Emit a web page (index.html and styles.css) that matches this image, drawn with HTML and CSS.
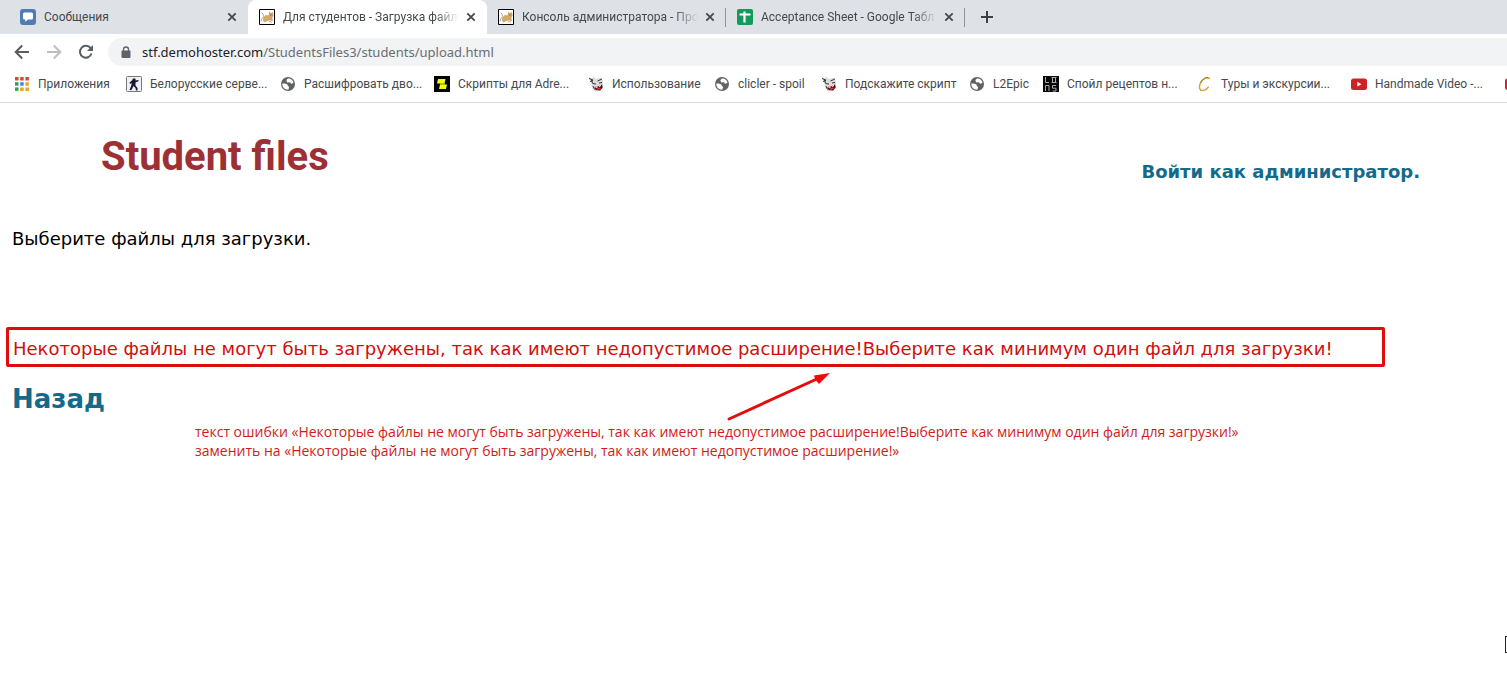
FILE: index.html
```html
<!DOCTYPE html>
<html lang="ru">
<head>
<meta charset="utf-8">
<title>Для студентов - Загрузка файлов</title>
<link rel="stylesheet" href="styles.css">
</head>
<body>
<svg class="defs" aria-hidden="true">
  <symbol id="close" viewBox="0 0 16 16"><path d="M4.3 4.3l7.4 7.4M11.7 4.3l-7.4 7.4" stroke="#45494d" stroke-width="1.8" fill="none"/></symbol>
  <symbol id="cat" viewBox="0 0 16 16"><path d="M.5.5h15v15H.5z" fill="#fff" stroke="#000"/><path d="M4.500 9l2-2.500 3.500.3L10.500 3l1.300 1.500 1.700-1 .8 3-1.300 2 .5 3.500-2-1-3 .5-3 1.500-1-1z" fill="#d9ab62" stroke="#a17a40" stroke-width=".4"/><path d="M2.500 3.500l1.500 1.500.5 2.500-2 2.500-.5 2.500M10 12.500l3 .5" fill="none" stroke="#999" stroke-width=".8"/><path d="M11.500 6h.8" stroke="#222"/></symbol>
  <symbol id="globe" viewBox="0 0 16 16"><circle cx="8" cy="8" r="7" fill="#5f6368"/><path d="M2.300 7.500c1.500-.2 3.500 0 4.700.8.900.7.500 1.700 1.700 2.200.6.300.2 2-.4 3.200C4.700 13.800 2.200 11.200 2.300 7.500zM6.500 4.200C6.800 3 8 2.400 9.300 2.500c2.200.5 3.700 2 4.200 4-.8.500-1.200 1.400-2.300 1.200-.9-.2-.5-1.300-1.500-1.400-1.200 0-2.300.5-2.700-.4-.2-.6-.6-.9-.5-1.700z" fill="#fff"/></symbol>
  <symbol id="face" viewBox="0 0 16 16"><path d="M1 1l3 1.500 1-2 3 2.500 5-1.500 2 4v6l-3 3.500-5 .5-3-4-1-5z" fill="#dcdcdc"/><path d="M1 2.500l4 1.500M2 5.500l3-1M4.500 7.500l3.500.5M9.500 5l4.500-2M11 7l3-.5M5 10l1.500 3.500M3.500 4l1 3" stroke="#333" stroke-width="1" fill="none"/><path d="M6.500 11l3.500-.5 4-2 .7 3-2.700 3-4.500-.5z" fill="#511"/><path d="M8 12.700l4-1.200 1 .8-3 1.700z" fill="#e33"/><path d="M7.500 11.300h2M11 10.500l2-1" stroke="#fff"/></symbol>
  <symbol id="tube" viewBox="0 0 16 16"><rect y="2.500" width="16" height="11.500" rx="2.500" fill="#cf2227"/><path d="M6.300 5.800l4.200 2.400-4.200 2.400z" fill="#fff"/></symbol>
</svg>

<nav class="tabs" aria-label="Вкладки">
  <div class="tab first">
    <svg class="icon" viewBox="0 0 16 16"><rect width="16" height="16" rx="3" fill="#4f7db3"/><path d="M4.500 3.500h7q1.500 0 1.500 1.500v4q0 1.500-1.500 1.500H8l-2.700 2.300v-2.300h-.8Q3 10.500 3 9V5q0-1.500 1.500-1.500z" fill="#fff"/></svg>
    <span class="tab-title">Сообщения</span>
    <button class="close" aria-label="Закрыть"><svg class="icon"><use href="#close"/></svg></button>
  </div>
  <div class="tab active">
    <svg class="icon"><use href="#cat"/></svg>
    <span class="tab-title fade">Для студентов - Загрузка файло</span>
    <button class="close" aria-label="Закрыть"><svg class="icon"><use href="#close"/></svg></button>
  </div>
  <div class="tab divided">
    <svg class="icon"><use href="#cat"/></svg>
    <span class="tab-title fade">Консоль администратора - Про</span>
    <button class="close" aria-label="Закрыть"><svg class="icon"><use href="#close"/></svg></button>
  </div>
  <div class="tab divided">
    <svg class="icon" viewBox="0 0 16 16"><rect width="16" height="16" rx="2" fill="#149a58"/><path d="M2.500 5.500h11M7.500 2.500v11" stroke="#fff" stroke-width="2.200"/></svg>
    <span class="tab-title fade">Acceptance Sheet - Google Табл</span>
    <button class="close" aria-label="Закрыть"><svg class="icon"><use href="#close"/></svg></button>
  </div>
  <button class="new-tab" aria-label="Новая вкладка"><svg class="icon" viewBox="0 0 16 16"><path d="M8 2v12M2 8h12" stroke="#3c4043" stroke-width="2"/></svg></button>
</nav>

<div class="toolbar">
  <button class="nav-button" aria-label="Назад"><svg class="icon" viewBox="0 0 16 16"><path d="M15 8H2M8.200 1.500L1.700 8l6.500 6.500" fill="none" stroke="#5a5e62" stroke-width="2"/></svg></button>
  <button class="nav-button" aria-label="Вперёд"><svg class="icon" viewBox="0 0 16 16"><path d="M1 8h13M7.800 1.500L14.300 8l-6.500 6.500" fill="none" stroke="#bcbec0" stroke-width="2"/></svg></button>
  <button class="nav-button" aria-label="Обновить"><svg class="icon" viewBox="0 0 16 16"><path d="M13.500 9.500A5.900 5.900 0 1 1 12.600 4.200" fill="none" stroke="#5a5e62" stroke-width="2"/><path d="M15 1v6H9z" fill="#5a5e62"/></svg></button>
  <div class="address">
    <svg class="lock" viewBox="0 0 10 13"><rect x=".5" y="4.500" width="9" height="7.500" rx="1" fill="#5f6368"/><path d="M2.500 5V3.500a2.500 2.500 0 0 1 5 0V5" fill="none" stroke="#5f6368" stroke-width="1.300"/></svg>
    <span class="url"><span class="host">stf.demohoster.com</span>/StudentsFiles3/students/upload.html</span>
  </div>
</div>

<nav class="bookmarks" aria-label="Закладки">
  <a href="#"><svg class="icon" viewBox="0 0 16 16"><path d="M1 1h3.500v3.500H1zM6.200 1h3.500v3.500H6.200zM11.400 1h3.500v3.500h-3.500z" fill="#dc4638"/><path d="M1 6.200h3.500v3.500H1z" fill="#3a9c57"/><path d="M6.200 6.200h3.500v3.500H6.200z" fill="#4287e8"/><path d="M11.400 6.200h3.500v3.500h-3.500zM6.200 11.400h3.500v3.500H6.200zM11.400 11.400h3.500v3.500h-3.500z" fill="#e7a72c"/><path d="M1 11.400h3.500v3.500H1z" fill="#3a9c57"/></svg><span class="w72">Приложения</span></a>
  <a href="#"><svg class="icon" viewBox="0 0 16 16"><rect x=".5" y=".5" width="15" height="15" rx="1" fill="#eef1f5" stroke="#777"/><path d="M7 2.500h2.500v2l3-.5v1.300L9.500 6.500v3l2 2.500v2.500H10L9.500 12 7.500 10 5.500 14H3.500L5.500 9V7L4 8 3.500 6.500 6 4.500z" fill="#17182d"/></svg><span class="w114">Белорусские серве...</span></a>
  <a href="#"><svg class="icon"><use href="#globe"/></svg><span class="w114">Расшифровать дво...</span></a>
  <a href="#"><svg class="icon" viewBox="0 0 16 16"><path d="M0 0h16v16H0z" fill="#000"/><path d="M4 3h7.500l-1 4.500H3zM6 8.500h7L12 13H5z" fill="#ef1"/><path d="M6 7.500h5v1H6z" fill="#ef1"/></svg><span class="w114">Скрипты для Adre...</span></a>
  <a href="#"><svg class="icon"><use href="#face"/></svg><span class="w86">Использование</span></a>
  <a href="#"><svg class="icon"><use href="#globe"/></svg><span class="w67">clicler - spoil</span></a>
  <a href="#"><svg class="icon"><use href="#face"/></svg><span class="w108">Подскажите скрипт</span></a>
  <a href="#"><svg class="icon"><use href="#globe"/></svg><span class="w34">L2Epic</span></a>
  <a href="#"><svg class="icon" viewBox="0 0 16 16"><path d="M0 0h16v16H0z" fill="#070707"/><path d="M2.500 1v5.500H6M8.500 1.500h5M8.500 6.500h5M9.500 1.500v5M12.500 1.500v5M2.500 15V9.500h3.500V15M13 9.500h-3.500v2.700h3.500V15H9.500" fill="none" stroke="#aaa" stroke-width="1"/></svg><span class="w114">Спойл рецептов н...</span></a>
  <a href="#"><svg class="icon" viewBox="0 0 16 16"><path d="M12.800 3C11 .2 6 2 3.500 7c-2 4.300-1 8 2.500 7.500 2.300-.3 4.300-1.700 5.700-3.700" fill="none" stroke="#d2a641" stroke-width="1.500"/><path d="M3.500 7C6 2 9 1.200 11 1.800" fill="none" stroke="#95702b"/></svg><span class="w114">Туры и экскурсии...</span></a>
  <a href="#"><svg class="icon"><use href="#tube"/></svg><span class="w114">Handmade Video -...</span></a>
  <a href="#" aria-label="Видео"><svg class="icon"><use href="#tube"/></svg></a>
</nav>

<main class="page">
  <header class="header">
    <h1 class="logo">Student files</h1>
    <a class="login" href="#">Войти как администратор.</a>
  </header>
  <p class="prompt">Выберите файлы для загрузки.</p>
  <p class="error">Некоторые файлы не могут быть загружены, так как имеют недопустимое расширение!Выберите как минимум один файл для загрузки!</p>
  <a class="back" href="#">Назад</a>
  <p class="note">текст ошибки «Некоторые файлы не могут быть загружены, так как имеют недопустимое расширение!Выберите как минимум один файл для загрузки!»<br>заменить на «Некоторые файлы не могут быть загружены, так как имеют недопустимое расширение!»</p>
  <svg class="arrow" viewBox="0 0 104 50" aria-hidden="true"><path d="M2 47L92 6" stroke="#e60c0c" stroke-width="3" stroke-linecap="round"/><path d="M103 1L87 3.500l1.500 4.500 3.500 4z" fill="#f00a0a"/></svg>
  <span class="pointer" aria-hidden="true"></span>
</main>
</body>
</html>
```
FILE: styles.css
```css
* { box-sizing: border-box; }

body {
  margin: 0;
  min-height: 100vh;
  display: flex;
  flex-direction: column;
  overflow: hidden;
  background: #fff;
  color: #000;
  font-family: "DejaVu Sans", sans-serif;
}

.defs { display: none; }
.icon { width: 16px; height: 16px; flex: none; display: block; }
button { border: 0; padding: 0; background: none; }
a { text-decoration: none; }

.tabs {
  display: flex;
  height: 34px;
  background: #dee1e6;
  color: #45494d;
  font: 12px/16px Roboto, sans-serif;
}
.tab {
  display: flex;
  align-items: center;
  flex: 0 1 239px;
  min-width: 0;
  padding: 0 8px 0 11px;
}
.tab.first { flex-basis: 248px; padding-left: 20px; border-radius: 0 0 8px 0; }
.tab.active { background: #fff; border-radius: 8px 8px 0 0; }
.tab.divided { background: linear-gradient(#909499, #909499) right 8px / 1px 19px no-repeat; }
.tab-title { flex: 1; min-width: 0; margin: 0 4px 0 8px; overflow: hidden; white-space: nowrap; }
.fade { mask-image: linear-gradient(to right, #000 calc(100% - 24px), transparent); }
.new-tab { margin-left: 14px; }

.toolbar { display: flex; align-items: center; gap: 16px; height: 36px; padding-left: 14px; }
.address {
  flex: 1;
  display: flex;
  align-items: center;
  height: 28px;
  margin-left: -2px;
  padding-left: 13px;
  border-radius: 14px 0 0 14px;
  background: #f1f3f4;
}
.lock { width: 10px; height: 13px; }
.url { margin-left: 11px; color: #6a6e72; font: 13px/20px "Noto Sans", sans-serif; }
.host { color: #202124; }

.bookmarks {
  display: flex;
  align-items: center;
  gap: 16px;
  height: 33px;
  padding: 0 0 4px 14px;
  border-bottom: 1px solid #d9dbde;
  overflow: hidden;
  font: 12px/16px Roboto, sans-serif;
}
.bookmarks a { display: flex; flex: none; gap: 8px; color: #45494d; white-space: nowrap; }
.w34 { width: 34px; }
.w67 { width: 67px; }
.w72 { width: 72px; }
.w86 { width: 86px; }
.w108 { width: 108px; }
.w114 { width: 114px; }

.page { position: relative; flex: 1; display: flex; flex-direction: column; align-items: flex-start; }
.header {
  align-self: stretch;
  display: flex;
  justify-content: space-between;
  align-items: flex-start;
  padding: 28px 87px 0 101px;
}
.logo { margin: 0; color: #9d3034; font: bold 40px/52px Roboto, sans-serif; }
.login { margin-top: 29px; color: #146a8a; font-size: 18px; line-height: 24px; font-weight: bold; }
.prompt { margin: 43px 0 0 12px; font-size: 18px; line-height: 24px; }
.error {
  align-self: stretch;
  margin: 76px 122px 0 6px;
  padding: 7px 4px 3px;
  border: 3px solid #e00c0c;
  border-radius: 2px;
  color: #d40d0d;
  font-size: 18px;
  line-height: 24px;
  white-space: nowrap;
}
.back { margin: 14px 0 0 12px; color: #146a8a; font-size: 26px; line-height: 36px; font-weight: bold; }
.note { margin: 5px 0 0 195px; color: #d01c20; font: 14px/19px "Open Sans", sans-serif; white-space: nowrap; }
.arrow { position: absolute; left: 727px; top: 269px; width: 104px; height: 50px; }
.pointer { position: absolute; right: 0; top: 533px; width: 2px; height: 17px; border: 1px solid #222; border-right: 0; }
```
